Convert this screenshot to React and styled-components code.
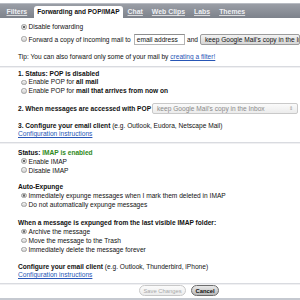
import React from "react";
import styled, { createGlobalStyle } from "styled-components";

const GlobalStyle = createGlobalStyle`
  html, body {
    margin: 0;
    padding: 0;
    background: #fff;
  }
  body {
    width: 300px;
    height: 300px;
    overflow: hidden;
    font-family: "Liberation Sans", Arial, sans-serif;
    font-size: 6.6px;
    color: #111;
  }
`;

const tabs = ["Filters", "Forwarding and POP/IMAP", "Chat", "Web Clips", "Labs", "Themes"];

const Radio = ({ checked, children }) => (
  <RadioRow>
    <Dot $checked={checked} />
    <span>{children}</span>
  </RadioRow>
);

const App = () => {
  return (
    <Page>
      <GlobalStyle />
      <TabBar>
        {tabs.map((t) => (
          <Tab key={t} $active={t === "Forwarding and POP/IMAP"}>
            {t}
          </Tab>
        ))}
      </TabBar>

      <Section $top={4.5}>
        <Radio checked>Disable forwarding</Radio>
        <ForwardRow>
          <Dot />
          <span>Forward a copy of incoming mail to</span>
          <TextInput>email address</TextInput>
          <span>and</span>
          <SelectBox $w={100}>keep Google Mail's copy in the Inbox</SelectBox>
        </ForwardRow>
        <Line $top={8.5}>
          Tip: You can also forward only some of your mail by <Link>creating a filter!</Link>
        </Line>
      </Section>

      <Divider $top={4.5} />

      <Section $top={1.5}>
        <Line>
          <b>1. Status: POP is disabled</b>
        </Line>
        <Radio>
          Enable POP for <b>all mail</b>
        </Radio>
        <Radio>
          Enable POP for <b>mail that arrives from now on</b>
        </Radio>
        <SelectLine>
          <b>2. When messages are accessed with POP</b>
          <SelectBox $disabled $w={146}>
            keep Google Mail's copy in the Inbox
            <Arrows>⇕</Arrows>
          </SelectBox>
        </SelectLine>
        <Line $top={8}>
          <b>3. Configure your email client</b> (e.g. Outlook, Eudora, Netscape Mail)
        </Line>
        <Line>
          <Link>Configuration instructions</Link>
        </Line>
      </Section>

      <Divider $top={3.5} />

      <Section $top={3.5} $row={9}>
        <Line>
          <b>Status: </b>
          <Green>IMAP is enabled</Green>
        </Line>
        <Radio checked>Enable IMAP</Radio>
        <Radio>Disable IMAP</Radio>

        <Line $top={7.5}>
          <b>Auto-Expunge</b>
        </Line>
        <Radio checked>Immediately expunge messages when I mark them deleted in IMAP</Radio>
        <Radio>Do not automatically expunge messages</Radio>

        <Line $top={9}>
          <b>When a message is expunged from the last visible IMAP folder:</b>
        </Line>
        <Radio checked>Archive the message</Radio>
        <Radio>Move the message to the Trash</Radio>
        <Radio>Immediately delete the message forever</Radio>

        <Line $top={8}>
          <b>Configure your email client</b> (e.g. Outlook, Thunderbird, iPhone)
        </Line>
        <Line $h={8}>
          <Link>Configuration instructions</Link>
        </Line>
      </Section>

      <Divider $top={3.5} />

      <ButtonBar>
        <Button $disabled>Save Changes</Button>
        <Button>Cancel</Button>
      </ButtonBar>
      <BottomBand />
    </Page>
  );
};

export default App;

const Page = styled.div`
  width: 300px;
  height: 300px;
  display: flex;
  flex-direction: column;
  overflow: hidden;
`;

const TabBar = styled.div`
  height: 14px;
  margin-top: 3px;
  padding-left: 2px;
  background: linear-gradient(#9a9ea6, #7d828b);
  border-top: 1px solid #b8bcc3;
  display: flex;
  align-items: flex-end;
  flex-shrink: 0;
`;

const Tab = styled.div`
  height: 12px;
  line-height: 12px;
  padding: ${(p) => (p.$active ? "0 3.5px" : "0 4.5px")};
  margin: ${(p) => (p.$active ? "0 0 0 2px" : "0")};
  font-size: ${(p) => (p.$active ? "6.5px" : "6.9px")};
  font-weight: bold;
  white-space: nowrap;
  border-radius: 3px 3px 0 0;
  color: ${(p) => (p.$active ? "#111" : "#eef0f4")};
  background: ${(p) => (p.$active ? "#fff" : "transparent")};
  text-decoration: ${(p) => (p.$active ? "none" : "underline")};
  text-decoration-color: rgba(255, 255, 255, 0.7);
`;

const Section = styled.div`
  --row: ${(p) => p.$row || 8.5}px;
  padding: ${(p) => p.$top || 0}px 0 0 18px;
  display: flex;
  flex-direction: column;
`;

const Line = styled.div`
  height: ${(p) => (p.$h ? `${p.$h}px` : "var(--row)")};
  line-height: ${(p) => (p.$h ? `${p.$h}px` : "var(--row)")};
  margin-top: ${(p) => p.$top || 0}px;
  white-space: nowrap;
`;

const RadioRow = styled.div`
  height: var(--row);
  line-height: var(--row);
  padding-left: 3px;
  display: flex;
  align-items: center;
  gap: 2px;
  white-space: nowrap;
`;

const Dot = styled.span`
  width: 5.5px;
  height: 5.5px;
  border-radius: 50%;
  flex-shrink: 0;
  box-sizing: border-box;
  border: 0.5px solid #a0a0a0;
  background: ${(p) =>
    p.$checked
      ? "radial-gradient(circle, #666 0 1px, #dedede 1.3px)"
      : "linear-gradient(#f6f6f6, #cdcdcd)"};
`;

const ForwardRow = styled.div`
  margin-top: 2.5px;
  height: 11px;
  padding-left: 3px;
  display: flex;
  align-items: center;
  gap: 2px;
  white-space: nowrap;
`;

const TextInput = styled.div`
  width: 66px;
  height: 11px;
  box-sizing: border-box;
  margin-left: 1px;
  padding-left: 2px;
  line-height: 10px;
  border: 1px solid #b4b4b4;
  border-top-color: #8e8e8e;
  background: #fff;
`;

const SelectBox = styled.div`
  width: ${(p) => p.$w}px;
  height: 11px;
  box-sizing: border-box;
  position: relative;
  padding-left: 4px;
  line-height: 9px;
  border: 1px solid ${(p) => (p.$disabled ? "#c9c9c9" : "#9c9c9c")};
  border-radius: 2px;
  color: ${(p) => (p.$disabled ? "#8a8a8a" : "#111")};
  background: ${(p) =>
    p.$disabled ? "linear-gradient(#fafafa, #ececec)" : "linear-gradient(#f3f3f3, #d6d6d6)"};
  white-space: nowrap;
  overflow: hidden;
  flex-shrink: 0;
`;

const Arrows = styled.span`
  position: absolute;
  right: 4px;
  top: 0;
  font-size: 5px;
  color: #999;
`;

const SelectLine = styled.div`
  margin-top: 7.5px;
  height: 11px;
  display: flex;
  align-items: center;
  gap: 1px;
  white-space: nowrap;
`;

const Link = styled.span`
  color: #2856b6;
  text-decoration: underline;
`;

const Green = styled.b`
  color: #2f8a1c;
`;

const Divider = styled.div`
  margin-top: ${(p) => p.$top || 0}px;
  height: 1px;
  border-bottom: 1px solid #f0f0f2;
  background: #d9dbe0;
  flex-shrink: 0;
`;

const ButtonBar = styled.div`
  height: 12px;
  padding: 0 0 0 139px;
  display: flex;
  align-items: center;
  gap: 5px;
  flex-shrink: 0;
`;

const Button = styled.div`
  height: 11px;
  line-height: 10px;
  box-sizing: border-box;
  padding: 0 3.5px;
  border-radius: 6px;
  font-size: 5.8px;
  white-space: nowrap;
  border: 1px solid ${(p) => (p.$disabled ? "#c8c8c8" : "#6e6e6e")};
  color: ${(p) => (p.$disabled ? "#a8a8a8" : "#111")};
  font-weight: ${(p) => (p.$disabled ? "normal" : "bold")};
  background: ${(p) =>
    p.$disabled ? "linear-gradient(#fbfbfb, #ececec)" : "linear-gradient(#e9e9e9, #b9b9b9)"};
`;

const BottomBand = styled.div`
  flex: 1;
  margin-top: 1px;
  background: #c5c9d0;
`;
